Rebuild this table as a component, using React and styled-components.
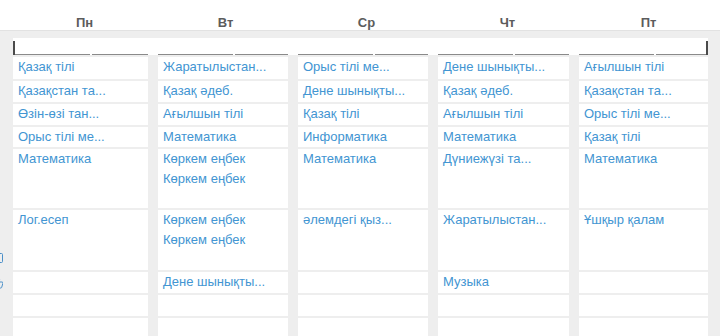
import React from "react";
import styled, { createGlobalStyle } from "styled-components";
import { Square, ThumbsUp } from "lucide-react";

const days = ["Пн", "Вт", "Ср", "Чт", "Пт"];

// one array per weekday, one entry per lesson slot
const schedule = [
  ["Қазақ тілі", "Қазақстан та...", "Өзін-өзі тан...", "Орыс тілі ме...", "Математика", "Лог.есеп", "", "", ""],
  ["Жаратылыстан...", "Қазақ әдеб.", "Ағылшын тілі", "Математика", ["Көркем еңбек", "Көркем еңбек"], ["Көркем еңбек", "Көркем еңбек"], "Дене шынықты...", "", ""],
  ["Орыс тілі ме...", "Дене шынықты...", "Қазақ тілі", "Информатика", "Математика", "әлемдегі қыз...", "", "", ""],
  ["Дене шынықты...", "Қазақ әдеб.", "Ағылшын тілі", "Математика", "Дүниежүзі та...", "Жаратылыстан...", "Музыка", "", ""],
  ["Ағылшын тілі", "Қазақстан та...", "Орыс тілі ме...", "Қазақ тілі", "Математика", "Ұшқыр қалам", "", "", ""],
];

const GlobalStyle = createGlobalStyle`
  html, body {
    margin: 0;
    height: 336px;
    overflow: hidden;
    background: #fff;
    font-family: "Liberation Sans", Arial, sans-serif;
  }
  #root { height: 100%; }
`;

const Page = styled.div`
  display: flex;
  flex-direction: column;
  height: 100%;
`;

const Header = styled.div`
  display: grid;
  grid-template-columns: repeat(5, 141px);
  padding-left: 14px;
  height: 30px;
  border-bottom: 1px solid #e2e2e2;
  box-sizing: content-box;
`;

const DayLabel = styled.div`
  padding-top: 15px;
  line-height: 15px;
  font-size: 13px;
  font-weight: bold;
  color: #5c5c5c;
  text-align: center;
`;

const Body = styled.div`
  flex: 1;
  background: #eeeeee;
  padding-top: 7px;
  display: grid;
  grid-template-columns: 3px 135px 130px 130px 131px 129px;
  grid-template-rows: 17px 22px 21px 21px 20px 59px 60px 21px 21px 1fr;
  column-gap: 10px;
  row-gap: 2px;
  overflow: hidden;
`;

const Strip = styled.div`
  grid-column: 2 / -1;
  grid-row: 1;
  background: #fff;
  padding-top: 3px;
  box-sizing: border-box;
`;

const StripInner = styled.div`
  display: grid;
  grid-template-columns: 133px 130px 130px 131px 127px;
  column-gap: 10px;
  height: 14px;
  border-left: 2px solid #4a4a4a;
  border-right: 2px solid #4a4a4a;
  box-sizing: border-box;
`;

const StripCol = styled.div`
  display: flex;
  gap: 2px;
`;

const StripSeg = styled.div`
  flex: ${(p) => (p.$first ? "0 0 75px" : "1")};
  border-bottom: 1px solid #8a8a8a;
`;

const Gutter = styled.div`
  grid-column: 1;
  grid-row: ${(p) => p.$row};
  display: flex;
  justify-content: flex-end;
  align-items: ${(p) => p.$align || "center"};
  padding-bottom: ${(p) => p.$pb || 0}px;
  overflow: hidden;
  color: #4a8fc8;

  svg {
    flex-shrink: 0;
    margin-right: -1px;
  }
`;

const Cell = styled.div`
  background: #fff;
  padding: 0 5px;
  overflow: hidden;
`;

const Lesson = styled.div`
  font-size: 13px;
  line-height: 20px;
  color: #4295d2;
  white-space: nowrap;
`;

export default function App() {
  return (
    <Page>
      <GlobalStyle />
      <Header>
        {days.map((d) => (
          <DayLabel key={d}>{d}</DayLabel>
        ))}
      </Header>
      <Body>
        <Strip>
          <StripInner>
            {days.map((d) => (
              <StripCol key={d}>
                <StripSeg $first />
                <StripSeg />
              </StripCol>
            ))}
          </StripInner>
        </Strip>
        <Gutter $row={7} $align="flex-end" $pb={6}>
          <Square size={12} strokeWidth={2} />
        </Gutter>
        <Gutter $row={8}>
          <ThumbsUp size={12} strokeWidth={2} />
        </Gutter>
        {schedule.map((col, ci) =>
          col.map((item, ri) => (
            <Cell key={`${ci}-${ri}`} style={{ gridColumn: ci + 2, gridRow: ri + 2 }}>
              {(Array.isArray(item) ? item : [item]).map((t, i) =>
                t ? <Lesson key={i}>{t}</Lesson> : null
              )}
            </Cell>
          ))
        )}
      </Body>
    </Page>
  );
}
